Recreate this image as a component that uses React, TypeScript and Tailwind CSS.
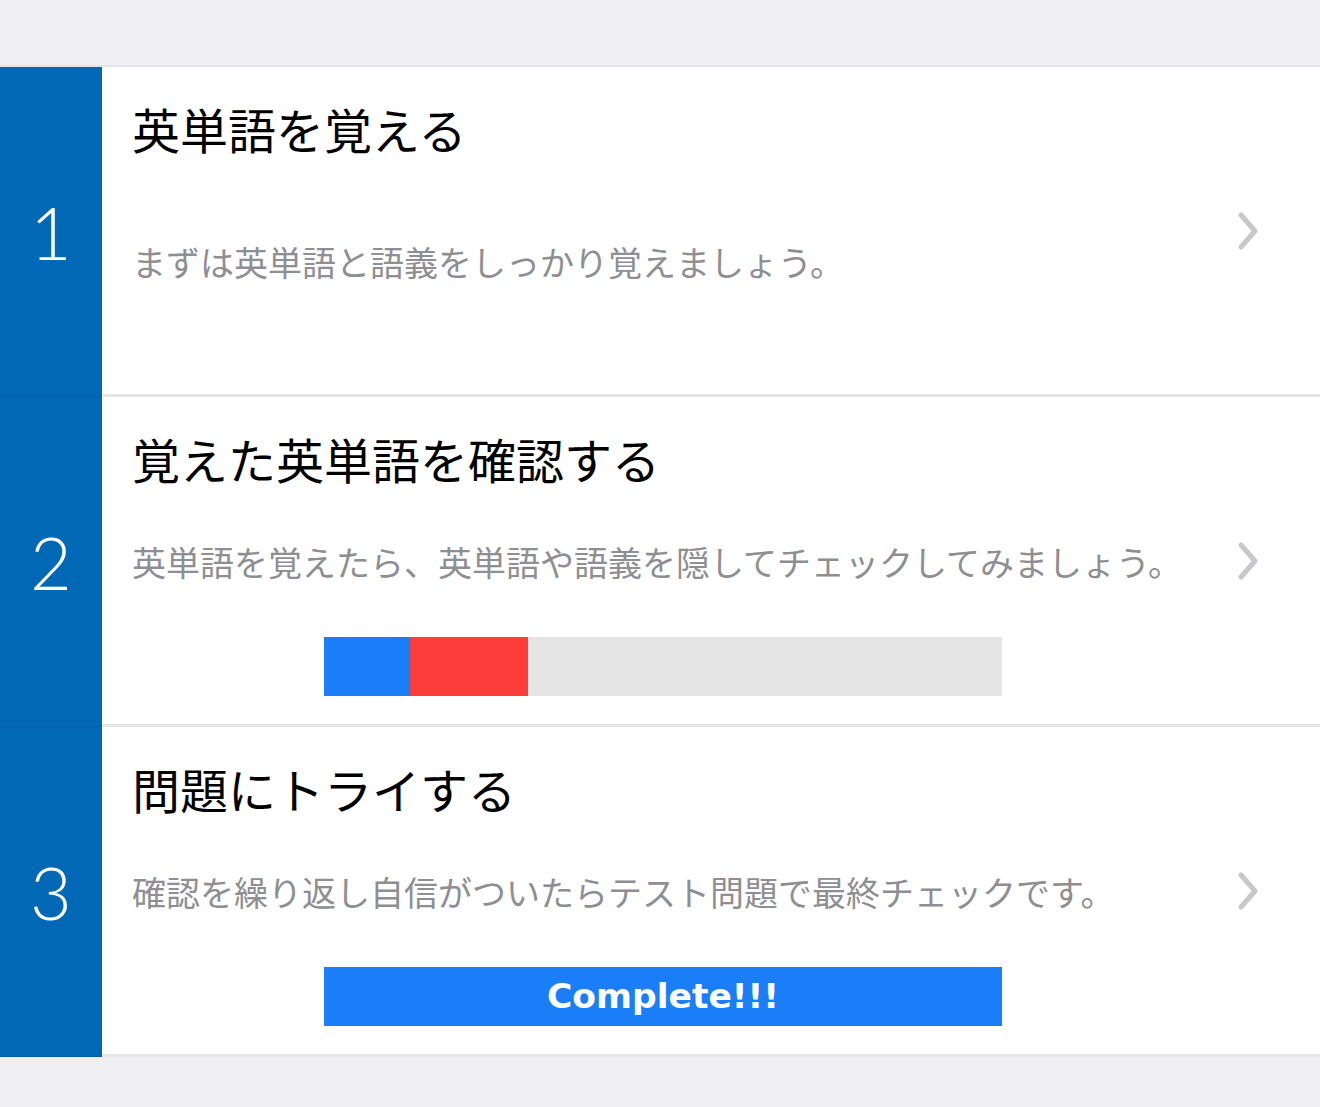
import React from "react";

type Step = {
  no: number;
  title: string;
  desc: string;
  descTop: string;
  extra?: "progress" | "complete";
};

const steps: Step[] = [
  {
    no: 1,
    title: "英単語を覚える",
    desc: "まずは英単語と語義をしっかり覚えましょう。",
    descTop: "mt-[78px]",
  },
  {
    no: 2,
    title: "覚えた英単語を確認する",
    desc: "英単語を覚えたら、英単語や語義を隠してチェックしてみましょう。",
    descTop: "mt-[48px]",
    extra: "progress",
  },
  {
    no: 3,
    title: "問題にトライする",
    desc: "確認を繰り返し自信がついたらテスト問題で最終チェックです。",
    descTop: "mt-[48px]",
    extra: "complete",
  },
];

function Chevron() {
  return (
    <svg width="24" height="40" viewBox="0 0 24 40" fill="none">
      <path
        d="M5 4 L19 20 L5 36"
        stroke="#c7c7cc"
        strokeWidth="5"
        strokeLinecap="round"
        strokeLinejoin="round"
      />
    </svg>
  );
}

function StepRow({ step }: { step: Step }) {
  return (
    <div className="flex h-[330px]">
      {/* number column */}
      <div className="flex w-[102px] shrink-0 items-center justify-center border-b border-[#005fa6] bg-[#0068b4]">
        <span className="font-['Lato','Liberation_Sans',sans-serif] text-[72px] font-light leading-none text-white">
          {step.no}
        </span>
      </div>

      {/* body */}
      <div className="flex flex-1 border-b-[3px] border-[#e6e6e8] bg-white">
        <div className="flex-1 pl-[30px] pt-[29px]">
          <h2 className="text-[48px] leading-[64px] text-black">{step.title}</h2>
          <p className={`${step.descTop} text-[34px] leading-[48px] text-[#8e8e93]`}>
            {step.desc}
          </p>

          {step.extra === "progress" && (
            <div className="ml-[192px] mt-[51px] flex h-[59px] w-[678px] bg-[#e5e5e5]">
              <div className="w-[86px] bg-[#1a7ef8]" />
              <div className="w-[118px] bg-[#fd3d3a]" />
            </div>
          )}

          {step.extra === "complete" && (
            <div className="ml-[192px] mt-[51px] flex h-[59px] w-[678px] items-center justify-center bg-[#1a7ef8]">
              <span className="font-['DejaVu_Sans',sans-serif] text-[34.5px] font-bold leading-none text-white">
                Complete!!!
              </span>
            </div>
          )}
        </div>

        <div className="flex items-center pr-[60px]">
          <Chevron />
        </div>
      </div>
    </div>
  );
}

export default function App() {
  return (
    <div className="min-h-[1107px] w-full bg-[#efeff4] font-['Noto_Sans_CJK_JP','Noto_Sans',sans-serif]">
      <div className="h-[67px] border-b-2 border-[#e4e4e8]" />
      {steps.map((s) => (
        <StepRow key={s.no} step={s} />
      ))}
    </div>
  );
}
